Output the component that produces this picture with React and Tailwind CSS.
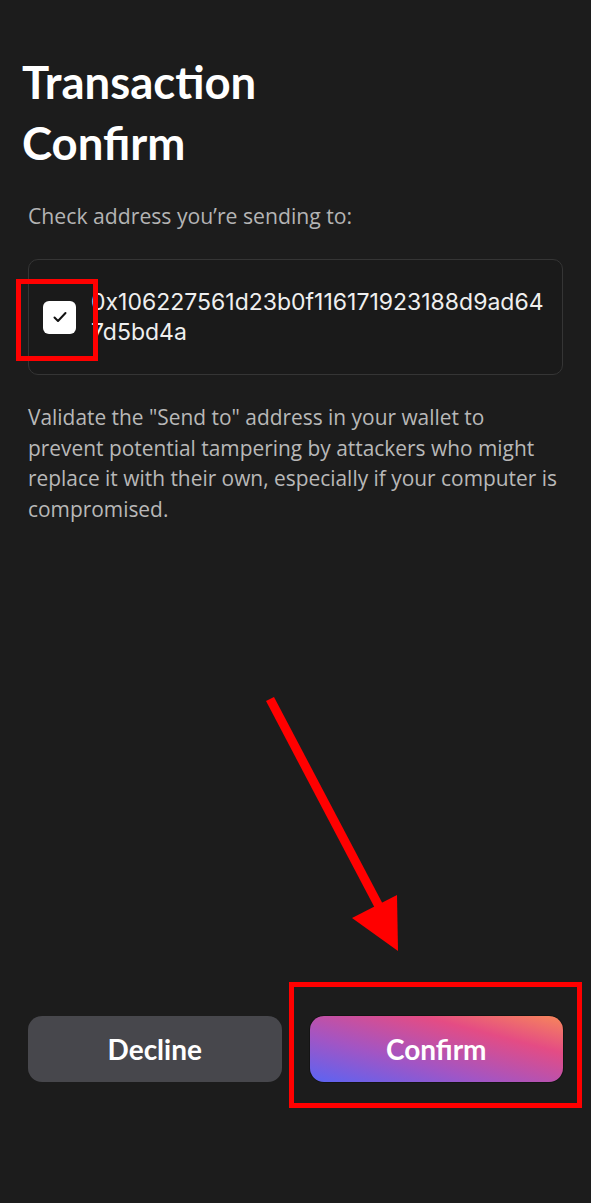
import React from "react";

const body = "font-['Open_Sans','Noto_Sans',sans-serif]";
const heading = "font-['Lato','Noto_Sans',sans-serif]";

function Annotations() {
  return (
    <>
      <div className="pointer-events-none absolute left-[16px] top-[279px] h-[82px] w-[82px] border-[5px] border-[#ff0000]" />
      <div className="pointer-events-none absolute left-[289px] top-[982px] h-[126px] w-[293px] border-[5px] border-[#ff0000]" />
      <svg
        aria-hidden="true"
        className="pointer-events-none absolute left-0 top-0"
        width="591"
        height="1203"
        viewBox="0 0 591 1203"
      >
        <line x1="270" y1="699" x2="382" y2="912" stroke="#ff0000" strokeWidth="9" />
        <polygon points="352,918 397,895 398,951" fill="#ff0000" />
      </svg>
    </>
  );
}

export default function App() {
  return (
    <div className={`relative flex min-h-[1203px] w-full flex-col bg-[#1c1c1c] px-7 pt-[51px] pb-[121px] ${body}`}>
      <h1 className={`ml-[-6px] text-[45.5px] font-bold leading-[61px] text-white ${heading}`}>
        Transaction
        <br />
        Confirm
      </h1>

      <p className="mt-[28px] text-[21.2px] leading-[30px] text-[#b4b4b4]">
        Check address you’re sending to:
      </p>

      <div className="mt-[28px] flex items-center gap-[15px] rounded-[10px] border border-[#353535] bg-[#1a1a1a] py-[27px] pl-[14px] pr-[14px]">
        <div className="flex h-[33px] w-[33px] shrink-0 items-center justify-center rounded-[6px] bg-white">
          <svg width="14" height="12" viewBox="0 0 14 12" fill="none">
            <path d="M1.5 6.5 L5 10 L12.5 2" stroke="#111" strokeWidth="2" strokeLinecap="round" strokeLinejoin="round" />
          </svg>
        </div>
        <p className="min-w-0 font-['Inter','Roboto',sans-serif] text-[23px] leading-[30px] text-[#efefef]">
          <span className="block whitespace-nowrap">0x106227561d23b0f116171923188d9ad64</span>
          <span className="block">7d5bd4a</span>
        </p>
      </div>

      <p className="mt-[27px] text-[20.9px] leading-[30.5px] text-[#b8b8b8]">
        Validate the "Send to" address in your wallet to prevent potential tampering by attackers who might replace it with their own, especially if your computer is compromised.
      </p>

      <div className={`mt-auto grid grid-cols-2 gap-[28px] ${heading}`}>
        <button className="h-[66px] rounded-[14px] bg-[#47474c] text-[28px] font-bold text-white">
          Decline
        </button>
        <button className="h-[66px] rounded-[14px] bg-[linear-gradient(to_top_right,#5a64f3_0%,#a255c4_35%,#e44c84_72%,#f7875a_100%)] text-[28px] font-bold text-white shadow-[0_0_0_1px_#141414]">
          Confirm
        </button>
      </div>

      <Annotations />
    </div>
  );
}
